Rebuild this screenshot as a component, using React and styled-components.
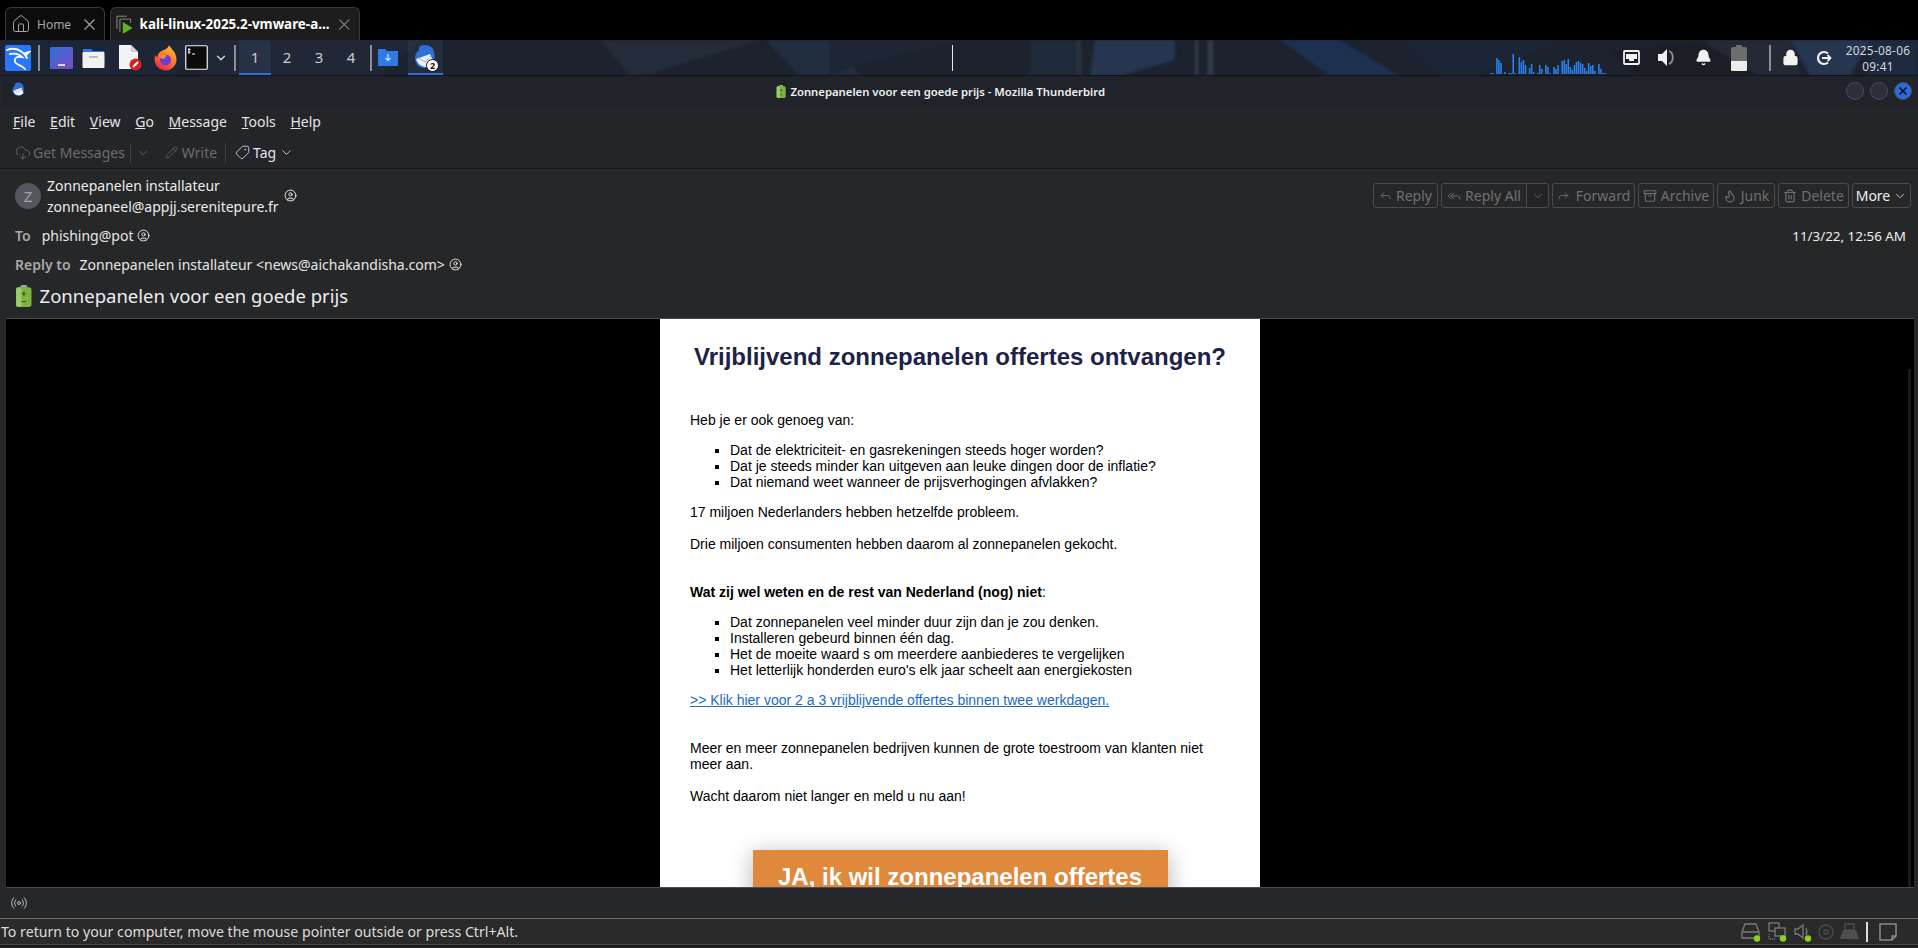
import React from "react";
import styled, { createGlobalStyle } from "styled-components";
import {
  Home, X, ChevronDown, Tag, Pencil, CloudDownload, Reply, ReplyAll, Forward,
  Archive, Flame, Trash2, Radio, CircleUser, Bell, Lock,
} from "lucide-react";

const GlobalStyle = createGlobalStyle`
html, body { margin: 0; padding: 0; background: #000; }
* { box-sizing: border-box; }
body { font-family: "Noto Sans", sans-serif; overflow: hidden; }
`;

const Page = styled.div`
width: 1918px;
height: 948px;
display: flex;
flex-direction: column;
overflow: hidden;
background: #000;
`;

/* ---------- vmware tabs ---------- */
const TabStrip = styled.div`
height: 40px;
flex: none;
display: flex;
align-items: flex-end;
gap: 5px;
padding-left: 5px;
background: #000;
`;

const HostTab = styled.div`
height: 33px;
width: ${(p) => p.$w}px;
display: flex;
align-items: center;
gap: 6px;
padding: 0 5px 0 5px;
border: 1px solid #3a3a3a;
border-bottom: none;
border-radius: 6px 6px 0 0;
background: ${(p) => (p.$active ? "#1d1d1d" : "#0c0c0c")};
color: ${(p) => (p.$active ? "#fff" : "#a6a6a6")};
font-size: ${(p) => (p.$active ? 13.4 : 12)}px;
font-weight: ${(p) => (p.$active ? 700 : 400)};
`;

const TabLabel = styled.span`
flex: 1;
white-space: nowrap;
`;

/* ---------- kali panel ---------- */
const Panel = styled.div`
position: relative;
height: 36px;
flex: none;
display: flex;
align-items: center;
padding-left: 5px;
background: #1c2230;
border-bottom: 1px solid #10131a;
overflow: hidden;
`;

const Wallpaper = styled.svg`
position: absolute;
left: 0;
top: 0;
filter: blur(1.5px);
`;

const PanelGroup = styled.div`
position: relative;
display: flex;
align-items: center;
height: 100%;
margin-left: ${(p) => p.$ml || 0}px;
`;

const PanelSep = styled.div`
width: 2px;
height: 26px;
background: #8b8f98;
margin: ${(p) => p.$m || "0"};
`;

const Launcher = styled.div`
width: ${(p) => p.$w || 35}px;
height: 100%;
display: flex;
align-items: center;
justify-content: center;
`;

const Workspace = styled.div`
width: 32px;
height: 100%;
display: flex;
align-items: center;
justify-content: center;
color: #c9ccd2;
font-size: 15px;
padding-top: 1px;
border-bottom: 2px solid ${(p) => (p.$on ? "#2f6fd6" : "transparent")};
background: ${(p) => (p.$on ? "rgba(60,80,110,.25)" : "transparent")};
`;

const ActiveApp = styled.div`
position: relative;
width: 35px;
height: 100%;
margin-left: 4px;
display: flex;
align-items: center;
justify-content: center;
border-bottom: 2px solid #2f6fd6;
background: rgba(60,80,110,.25);
`;

const AppBadge = styled.span`
position: absolute;
right: 4px;
bottom: 1px;
width: 13px;
height: 13px;
border-radius: 50%;
background: #fff;
border: 1px solid #111;
color: #111;
font-size: 9px;
font-weight: 700;
line-height: 11px;
text-align: center;
`;

const MidLine = styled.div`
width: 1px;
height: 26px;
background: #e8e8e8;
margin-left: 509px;
`;

const Graph = styled.svg`
display: block;
margin-left: 537px;
margin-bottom: 1px;
align-self: flex-end;
`;

const Tray = styled.div`
width: ${(p) => p.$w || 36}px;
display: flex;
justify-content: center;
align-items: center;
color: #eee;
`;

const Clock = styled.div`
width: 68px;
text-align: center;
color: #d5d7db;
font-size: 11.8px;
line-height: 16px;
letter-spacing: .3px;
`;

/* ---------- thunderbird window ---------- */
const Window = styled.div`
flex: 1;
min-height: 0;
display: flex;
flex-direction: column;
background: #26272a;
padding: 0 0 0 1px;
`;

const TitleBar = styled.div`
position: relative;
height: 31px;
flex: none;
display: flex;
align-items: center;
justify-content: center;
gap: 4px;
background: #21232a;
color: #f0f0f0;
font-size: 11.3px;
font-weight: 600;
padding-right: 38px;
`;

const TitleIcon = styled.div`
position: absolute;
left: 11px;
top: 6px;
`;

const WinButtons = styled.div`
position: absolute;
right: 6px;
top: 6px;
display: flex;
gap: 6px;
`;

const WinDot = styled.div`
width: 18px;
height: 18px;
border-radius: 50%;
border: 1px solid #4a4d58;
background: ${(p) => (p.$close ? "#2b6be0" : "#2c2f3a")};
color: #10131a;
display: flex;
align-items: center;
justify-content: center;
`;

const MenuBar = styled.div`
height: 30px;
flex: none;
display: flex;
align-items: center;
gap: 14.7px;
padding: 0 0 2px 12px;
background: #242529;
color: #e4e4e6;
font-size: 14px;
`;

const MenuItem = styled.span`
display: inline-block;
&::first-letter { text-decoration: underline; }
`;

const ToolBar = styled.div`
height: 32px;
flex: none;
display: flex;
align-items: center;
padding-left: 14px;
background: #242529;
border-bottom: 1px solid #15151a;
font-size: 14px;
color: #e4e4e6;
`;

const ToolItem = styled.div`
display: flex;
align-items: center;
gap: ${(p) => p.$gap ?? 3}px;
margin-left: ${(p) => p.$ml || 0}px;
color: ${(p) => (p.$off ? "#6b6c70" : "#e4e4e6")};
`;

const ToolSep = styled.div`
width: 1px;
height: 20px;
background: #3d3e42;
margin-left: ${(p) => p.$ml || 0}px;
`;

const MessageHeader = styled.div`
height: 149px;
flex: none;
display: flex;
flex-direction: column;
padding: 1px 7px 0 14px;
background: #262729;
color: #eee;
font-size: 14px;
`;

const SenderRow = styled.div`
height: 51px;
display: flex;
align-items: center;
`;

const Avatar = styled.div`
width: 26px;
height: 26px;
border-radius: 50%;
background: #55565e;
color: #a3a4aa;
display: flex;
align-items: center;
justify-content: center;
font-size: 15px;
margin-right: 6px;
`;

const SenderText = styled.div`
line-height: 21px;
color: #ececec;
`;

const SenderIcon = styled.div`
margin: 0 0 0 5px;
display: flex;
`;

const ActionBar = styled.div`
margin-left: auto;
display: flex;
gap: 3px;
align-items: center;
`;

const SplitButton = styled.div`
display: flex;
`;

const ActionButton = styled.div`
height: 25px;
width: ${(p) => p.$w}px;
display: flex;
align-items: center;
justify-content: center;
gap: ${(p) => p.$gap ?? 4}px;
border: 1px solid #4a4b4e;
border-radius: ${(p) => p.$radius || "3px"};
color: ${(p) => (p.$on ? "#eee" : "#6f7073")};
background: ${(p) => (p.$dim ? "#232325" : "transparent")};
margin-left: ${(p) => p.$ml || 0}px;
`;

const FieldRow = styled.div`
height: 29px;
display: flex;
align-items: center;
gap: ${(p) => p.$gap || 9}px;
`;

const FieldLabel = styled.span`
font-weight: 600;
font-size: 14px;
color: #a9a9ab;
`;

const FieldValue = styled.span`
display: flex;
align-items: center;
gap: 4px;
color: #e6e6e6;
font-size: 14px;
`;

const DateText = styled.span`
margin-left: auto;
margin-right: 5px;
font-size: 13.4px;
`;

const SubjectRow = styled.div`
height: 33px;
display: flex;
align-items: center;
gap: 7px;
font-size: 18.5px;
color: #eee;
`;

/* ---------- the mail itself ---------- */
const MailArea = styled.div`
position: relative;
flex: 1;
min-height: 0;
margin: 0 4px 0 5px;
background: #000;
border-top: 1px solid #4b4c4f;
border-bottom: 1px solid #4b4c4f;
display: flex;
justify-content: center;
overflow: hidden;
`;

const ScrollThumb = styled.div`
position: absolute;
right: 3px;
top: 50px;
bottom: 0;
width: 3px;
background: #1b1b1c;
`;

const Mail = styled.div`
width: 600px;
flex: none;
background: #fff;
color: #000;
padding: 0 30px;
font-family: "Liberation Sans", Arial, sans-serif;
font-size: 14px;
line-height: 16px;
`;

const MailTitle = styled.h1`
margin: 0;
padding-top: 23px;
height: 93px;
text-align: center;
color: #1c2347;
font-size: 24px;
line-height: 30px;
font-weight: 700;
white-space: nowrap;
`;

const Para = styled.p`
margin: ${(p) => p.$top ?? 14}px 0 14px;
`;

const BulletList = styled.ul`
margin: 14px 0;
padding-left: 40px;
list-style: square;
`;

const MailLink = styled.a`
color: #1a6bbd;
text-decoration: underline;
`;

const CallToAction = styled.div`
width: 415px;
margin: 46px auto 0;
padding: 12px 20px;
background: #e0893c;
color: #fff;
font-size: 24px;
line-height: 30px;
font-weight: 700;
text-align: center;
box-shadow: 0 4px 22px rgba(0,0,0,.3);
`;

const WindowStatus = styled.div`
height: 30px;
flex: none;
display: flex;
align-items: center;
padding-left: 9px;
background: #26272a;
color: #c8c8c8;
`;

/* ---------- vmware bottom bar ---------- */
const HostBar = styled.div`
height: 27px;
flex: none;
display: flex;
align-items: center;
padding-left: 1px;
background: #2a2a2a;
border-top: 1px solid #6a6a6a;
border-bottom: 1px solid #444;
color: #dcdcdc;
font-size: 14.15px;
`;

const HostIcons = styled.div`
margin-left: auto;
display: flex;
align-items: center;
gap: 6px;
padding-right: 21px;
`;

const HostSep = styled.div`
width: 2px;
height: 20px;
background: #ddd;
margin: 0 5px 0 1px;
`;

const HostFoot = styled.div`
height: 3px;
flex: none;
background: #1c1c1c;
`;

/* ---------- drawings ---------- */
const BatteryEmoji = ({ size = 18 }) => (
  <svg width={size * 0.8} height={size} viewBox="0 0 16 20">
    <rect x="5" y="0" width="6" height="3" rx="1" fill="#9aa3a8" />
    <rect x="1" y="2" width="14" height="18" rx="2.5" fill="#7cb342" />
    <rect x="1" y="2" width="5" height="18" rx="2" fill="#9ccc65" />
    <path d="M8 6v4M6 8h4M6 15h4" stroke="#2e5a1a" strokeWidth="1" />
  </svg>
);

const KaliLogo = () => (
  <svg width="26" height="26" viewBox="0 0 26 26">
    <rect width="26" height="26" rx="2" fill="#2777ff" />
    <path
      d="M2 5c5-2 11-1 15 2 3 2 4 4 5 6M5 9c5-1 9 0 12 3-5-1-8 1-7 5 1 3 7 3 10 7M20 8l4-1-3 3"
      fill="none" stroke="#fff" strokeWidth="1.8" strokeLinecap="round"
    />
  </svg>
);

const DesktopIcon = () => (
  <svg width="23" height="22" viewBox="0 0 23 22">
    <defs>
      <linearGradient id="dk" x1="0" y1="0" x2="1" y2="1">
        <stop offset="0" stopColor="#2f6fd8" />
        <stop offset="1" stopColor="#7a4bc4" />
      </linearGradient>
    </defs>
    <rect width="23" height="22" rx="1" fill="url(#dk)" />
    <rect x="8" y="17" width="7" height="2" fill="#dde" />
  </svg>
);

const FolderIcon = () => (
  <svg width="23" height="22" viewBox="0 0 23 22">
    <path d="M1 2h8l2 2h11v4H1z" fill="#2f7be6" />
    <rect x="0.5" y="5" width="22" height="16" rx="1" fill="#f1f1f1" />
    <rect x="7" y="9" width="9" height="2" fill="#bdbdbd" />
  </svg>
);

const DocIcon = () => (
  <svg width="24" height="27" viewBox="0 0 24 27">
    <path d="M1 1h12l7 7v17H1z" fill="#f4f4f4" />
    <path d="M13 1l7 7h-7z" fill="#cfcfcf" />
    <circle cx="17.5" cy="20.5" r="6" fill="#d92027" />
    <path d="M15 23l5-5" stroke="#fff" strokeWidth="1.8" />
  </svg>
);

const FoxIcon = () => (
  <svg width="23" height="27" viewBox="0 0 23 27">
    <defs>
      <linearGradient id="fx" x1="0.7" y1="0" x2="0.2" y2="1">
        <stop offset="0" stopColor="#ffbd2e" />
        <stop offset="0.55" stopColor="#ff6a2b" />
        <stop offset="1" stopColor="#e3224c" />
      </linearGradient>
    </defs>
    <path d="M15 1c1 3 7 6 7.500 14a11 11 0 1 1-21-4c.5 1 1 2 2 2 0-3 2-5 4-6 3-1 7-3 7.500-6z" fill="url(#fx)" />
    <circle cx="11.500" cy="16" r="5.500" fill="#6b3fd4" />
    <path d="M5 12c3-2 6-2 8 0-2 1-3 2-2 3-3 0-5-1-6-3z" fill="#ff8a2b" />
  </svg>
);

const TerminalIcon = () => (
  <svg width="23" height="25" viewBox="0 0 23 25">
    <rect x="0.750" y="0.750" width="21.500" height="23.500" rx="1" fill="#0b0b0b" stroke="#f1f1f1" strokeWidth="1.200" />
    <path d="M4 3v6M3 4.500h2.500M3 7h2.500M7 9h3" stroke="#fff" strokeWidth="1" fill="none" />
  </svg>
);

const DownloadFolder = () => (
  <svg width="22" height="19" viewBox="0 0 22 19">
    <path d="M1 1h7l2 2h11v15H1z" fill="#2f7be6" />
    <path d="M11 6v6M8.500 10l2.500 2.500 2.500-2.500" stroke="#cfe2ff" strokeWidth="1.200" fill="none" />
  </svg>
);

const BirdIcon = ({ size = 26 }) => (
  <svg width={size * 0.85} height={size} viewBox="0 0 22 26">
    <path d="M6 2c3-2 8-1 11 1 4 3 4 10 3 14-2 5-6 7-10 7-5 0-9-4-9-10 0-4 2-6 4-8 0-1 0-3 1-4z" fill="#2f6fd6" />
    <path d="M2 15l14-5 4 9c-3 4-8 5-12 3-3-1-5-4-6-7z" fill="#eef2fa" />
    <path d="M4 14l7 4 6-6" fill="none" stroke="#9fb0cc" strokeWidth="1" />
  </svg>
);

const Wall = () => (
  <Wallpaper width="1918" height="36" viewBox="0 0 1918 36">
    <rect width="1918" height="36" fill="#1c222e" />
    <polygon points="0,0 210,0 170,36 0,36" fill="#1c2636" />
    <polygon points="150,0 420,0 380,36 210,36" fill="#202838" />
    <polygon points="600,0 760,0 650,34 630,36" fill="#242b39" />
    <polygon points="765,0 830,0 860,36 800,36" fill="#212e40" />
    <polygon points="830,0 960,0 860,24 830,36" fill="#1e2635" />
    <polygon points="1030,0 1075,0 1075,36 1030,36" fill="#1e2a3a" />
    <polygon points="1095,0 1175,0 1175,20 1120,36 1090,36" fill="#263650" />
    <rect x="1076" y="0" width="5" height="36" fill="#293343" />
    <rect x="1195" y="0" width="3" height="36" fill="#333d4c" />
    <rect x="1208" y="0" width="5" height="36" fill="#333d4c" />
    <polygon points="1280,0 1340,0 1400,36 1330,36" fill="#1c3050" />
    <polygon points="1400,0 1560,0 1480,36 1440,36" fill="#1b2536" />
    <polygon points="1610,12 1720,0 1770,36 1640,36" fill="#1b1e25" />
    <polygon points="1700,0 1790,0 1800,36 1760,36" fill="#232a36" />
    <polygon points="1790,0 1870,0 1850,36 1810,36" fill="#263550" />
    <rect x="1870" y="0" width="48" height="36" fill="#1d2a3f" />
  </Wallpaper>
);

const graphData = [1,1,0,16,14,11,0,2,0,1,1,20,1,0,17,12,14,9,0,6,10,2,0,1,9,5,0,9,7,1,0,7,5,9,0,13,14,10,15,7,4,9,12,13,11,10,6,3,11,8,9,3,0,10,5,1,1];

const tags = ["File", "Edit", "View", "Go", "Message", "Tools", "Help"];

const StatusDot = ({ cx, cy }) => <circle cx={cx} cy={cy} r="3.2" fill="#8cd321" stroke="none" />;

const HostIconSet = () => (
  <>
    <svg width="21" height="20" viewBox="0 0 21 20" fill="none" stroke="#7a7a7a" strokeWidth="1.300">
      <path d="M1 10l3-8h11l3 8v6H1zM1 10h17" />
      <StatusDot cx="16" cy="16.500" />
    </svg>
    <svg width="20" height="20" viewBox="0 0 20 20" fill="none" stroke="#7a7a7a" strokeWidth="1.300">
      <rect x="1" y="1" width="10" height="8" />
      <rect x="7" y="6" width="10" height="8" fill="#2a2a2a" />
      <path d="M1 12v5h6" strokeDasharray="1 1" />
      <StatusDot cx="15" cy="16.500" />
    </svg>
    <svg width="18" height="20" viewBox="0 0 18 20" fill="none" stroke="#7a7a7a" strokeWidth="1.300">
      <path d="M1 7h3l5-4v13l-5-4H1zM12 6c1 2 1 5 0 7" />
      <StatusDot cx="14" cy="16.500" />
    </svg>
    <svg width="16" height="20" viewBox="0 0 16 20" fill="none" stroke="#4b4b4b" strokeWidth="1.300">
      <circle cx="8" cy="10" r="7" />
      <circle cx="8" cy="10" r="2" />
    </svg>
    <svg width="19" height="20" viewBox="0 0 19 20">
      <path d="M5 2h9v6H5z" fill="none" stroke="#4f4f4f" strokeWidth="1.300" />
      <path d="M3 8h13l3 9H0z" fill="#4f4f4f" />
    </svg>
    <HostSep />
    <svg width="18" height="20" viewBox="0 0 18 20" fill="none" stroke="#8a8a8a" strokeWidth="1.500">
      <path d="M1 2h16v12l-4 4H1zM13 18v-4h4" />
    </svg>
  </>
);

function App() {
  return (
    <Page>
      <GlobalStyle />
      <TabStrip>
        <HostTab $w={100}>
          <Home size={20} strokeWidth={1.2} />
          <TabLabel>Home</TabLabel>
          <X size={19} strokeWidth={1.4} />
        </HostTab>
        <HostTab $w={250} $active>
          <svg width="18" height="20" viewBox="0 0 18 20">
            <path d="M1 15V2h10M4 18V5h11v4" fill="none" stroke="#8a8a8a" strokeWidth="1" />
            <path d="M7 8l10 6-10 6z" fill="#5fb31c" />
          </svg>
          <TabLabel>kali-linux-2025.2-vmware-a...</TabLabel>
          <X size={19} strokeWidth={1.4} color="#8a8a8a" />
        </HostTab>
      </TabStrip>

      <Panel>
        <Wall />
        <PanelGroup>
          <KaliLogo />
          <PanelSep $m="0 7px 0 7px" />
          <Launcher $w={28}><DesktopIcon /></Launcher>
          <Launcher $w={37}><FolderIcon /></Launcher>
          <Launcher $w={36}><DocIcon /></Launcher>
          <Launcher $w={34}><FoxIcon /></Launcher>
          <Launcher $w={29}><TerminalIcon /></Launcher>
          <Launcher $w={20}><ChevronDown size={14} color="#ddd" strokeWidth={2.2} /></Launcher>
          <PanelSep $m="0 3px 0 3px" />
          <Workspace $on>1</Workspace>
          <Workspace>2</Workspace>
          <Workspace>3</Workspace>
          <Workspace>4</Workspace>
          <PanelSep $m="0 0 0 3px" />
          <Launcher $w={32}><DownloadFolder /></Launcher>
          <ActiveApp>
            <BirdIcon size={26} />
            <AppBadge>2</AppBadge>
          </ActiveApp>
        </PanelGroup>
        <PanelGroup>
          <MidLine />
        </PanelGroup>
        <PanelGroup>
          <Graph width="116" height="30" viewBox="0 0 116 30">
            {graphData.map((h, i) => (
              <rect key={i} x={i * 2.04} y={30 - h} width="1.6" height={h} fill="#2a7fe8" />
            ))}
          </Graph>
        </PanelGroup>
        <PanelGroup $ml={7}>
          <Tray>
            <svg width="17" height="15" viewBox="0 0 17 15" fill="none" stroke="#f0f0f0" strokeWidth="1.800">
              <rect x="1" y="1" width="15" height="13" rx="1" />
              <path d="M3 4h11v5h-3v2H6V9H3z" fill="#f0f0f0" stroke="none" />
            </svg>
          </Tray>
          <Tray>
            <svg width="18" height="17" viewBox="0 0 18 17">
              <path d="M0 5h4l5-5v17l-5-5H0z" fill="#f0f0f0" />
              <path d="M11 2c5 2 5 11 0 13" fill="none" stroke="#8f939b" strokeWidth="1.800" />
            </svg>
          </Tray>
          <Tray>
            <Bell size={17} fill="#f2f2f2" color="#f2f2f2" />
          </Tray>
          <Tray>
            <svg width="16" height="26" viewBox="0 0 16 26">
              <rect x="5" y="0" width="6" height="3" fill="#6b6d70" />
              <rect x="0" y="2" width="16" height="24" rx="1.500" fill="#6b6d70" />
              <path d="M0 16h16v8.500a1.500 1.500 0 0 1-1.500 1.500h-13A1.500 1.500 0 0 1 0 24.500z" fill="#ececec" />
            </svg>
          </Tray>
          <PanelSep $m="0 5px 0 12px" />
          <Tray $w={28}>
            <Lock size={17} fill="#f2f2f2" color="#f2f2f2" />
          </Tray>
          <Tray $w={40}>
            <svg width="16" height="16" viewBox="0 0 16 16" fill="none" stroke="#f2f2f2" strokeWidth="2.200">
              <path d="M12 3.500a6 6 0 1 0 0 9" />
              <path d="M6 8h9M11.500 5l3 3-3 3" strokeWidth="1.800" />
            </svg>
          </Tray>
          <Clock>2025-08-06<br />09:41</Clock>
        </PanelGroup>
      </Panel>

      <Window>
        <TitleBar>
          <TitleIcon><BirdIcon size={15} /></TitleIcon>
          <BatteryEmoji size={13} />
          Zonnepanelen voor een goede prijs - Mozilla Thunderbird
          <WinButtons>
            <WinDot />
            <WinDot />
            <WinDot $close><X size={12} strokeWidth={3.5} /></WinDot>
          </WinButtons>
        </TitleBar>

        <MenuBar>
          {tags.map((t) => <MenuItem key={t}>{t}</MenuItem>)}
        </MenuBar>

        <ToolBar>
          <ToolItem $off $gap={2}><CloudDownload size={16} strokeWidth={1.3} />Get Messages</ToolItem>
          <ToolSep $ml={5} />
          <ToolItem $off $ml={5}><ChevronDown size={14} strokeWidth={1.3} /></ToolItem>
          <ToolItem $off $ml={15} $gap={4}><Pencil size={13} strokeWidth={1.3} />Write</ToolItem>
          <ToolSep $ml={8} />
          <ToolItem $ml={9} $gap={3}>
            <Tag size={15} strokeWidth={1.3} style={{ transform: "scaleX(-1)" }} />Tag
            <ChevronDown size={15} strokeWidth={1.3} />
          </ToolItem>
        </ToolBar>

        <MessageHeader>
          <SenderRow>
            <Avatar>Z</Avatar>
            <SenderText>
              Zonnepanelen installateur<br />
              zonnepaneel@appjj.serenitepure.fr
            </SenderText>
            <SenderIcon><CircleUser size={13} strokeWidth={1.8} /></SenderIcon>
            <ActionBar>
              <ActionButton $w={65}><Reply size={13} strokeWidth={1.6} />Reply</ActionButton>
              <SplitButton>
                <ActionButton $w={86} $radius="3px 0 0 3px"><ReplyAll size={14} strokeWidth={1.6} />Reply All</ActionButton>
                <ActionButton $w={23} $dim $radius="0 3px 3px 0" $ml={-1}><ChevronDown size={14} strokeWidth={1.3} /></ActionButton>
              </SplitButton>
              <ActionButton $w={83} $gap={6}><Forward size={13} strokeWidth={1.6} />Forward</ActionButton>
              <ActionButton $w={76}><Archive size={14} />Archive</ActionButton>
              <ActionButton $w={58}><Flame size={14} />Junk</ActionButton>
              <ActionButton $w={71}><Trash2 size={14} />Delete</ActionButton>
              <ActionButton $w={59} $on $gap={3}>More<ChevronDown size={14} strokeWidth={1.3} /></ActionButton>
            </ActionBar>
          </SenderRow>
          <FieldRow $gap={11}>
            <FieldLabel>To</FieldLabel>
            <FieldValue>phishing@pot <CircleUser size={13} strokeWidth={1.8} /></FieldValue>
            <DateText>11/3/22, 12:56 AM</DateText>
          </FieldRow>
          <FieldRow>
            <FieldLabel>Reply to</FieldLabel>
            <FieldValue>
              Zonnepanelen installateur &lt;news@aichakandisha.com&gt;
              <CircleUser size={13} strokeWidth={1.8} />
            </FieldValue>
          </FieldRow>
          <SubjectRow>
            <BatteryEmoji size={22} />
            Zonnepanelen voor een goede prijs
          </SubjectRow>
        </MessageHeader>

        <MailArea>
          <Mail>
            <MailTitle>Vrijblijvend zonnepanelen offertes ontvangen?</MailTitle>
            <Para $top={0}>Heb je er ook genoeg van:</Para>
            <BulletList>
              <li>Dat de elektriciteit- en gasrekeningen steeds hoger worden?</li>
              <li>Dat je steeds minder kan uitgeven aan leuke dingen door de inflatie?</li>
              <li>Dat niemand weet wanneer de prijsverhogingen afvlakken?</li>
            </BulletList>
            <Para>17 miljoen Nederlanders hebben hetzelfde probleem.</Para>
            <Para $top={16}>Drie miljoen consumenten hebben daarom al zonnepanelen gekocht.</Para>
            <Para $top={32}><b>Wat zij wel weten en de rest van Nederland (nog) niet</b>:</Para>
            <BulletList>
              <li>Dat zonnepanelen veel minder duur zijn dan je zou denken.</li>
              <li>Installeren gebeurd binnen één dag.</li>
              <li>Het de moeite waard s om meerdere aanbiederes te vergelijken</li>
              <li>Het letterlijk honderden euro's elk jaar scheelt aan energiekosten</li>
            </BulletList>
            <Para><MailLink href="#">&gt;&gt; Klik hier voor 2 a 3 vrijblijvende offertes binnen twee werkdagen.</MailLink></Para>
            <Para $top={32}>Meer en meer zonnepanelen bedrijven kunnen de grote toestroom van klanten niet meer aan.</Para>
            <Para $top={16}>Wacht daarom niet langer en meld u nu aan!</Para>
            <CallToAction>JA, ik wil zonnepanelen offertes vergelijken</CallToAction>
          </Mail>
          <ScrollThumb />
        </MailArea>

        <WindowStatus>
          <Radio size={18} strokeWidth={1.2} />
        </WindowStatus>
      </Window>

      <HostBar>
        To return to your computer, move the mouse pointer outside or press Ctrl+Alt.
        <HostIcons><HostIconSet /></HostIcons>
      </HostBar>
      <HostFoot />
    </Page>
  );
}

export default App;
